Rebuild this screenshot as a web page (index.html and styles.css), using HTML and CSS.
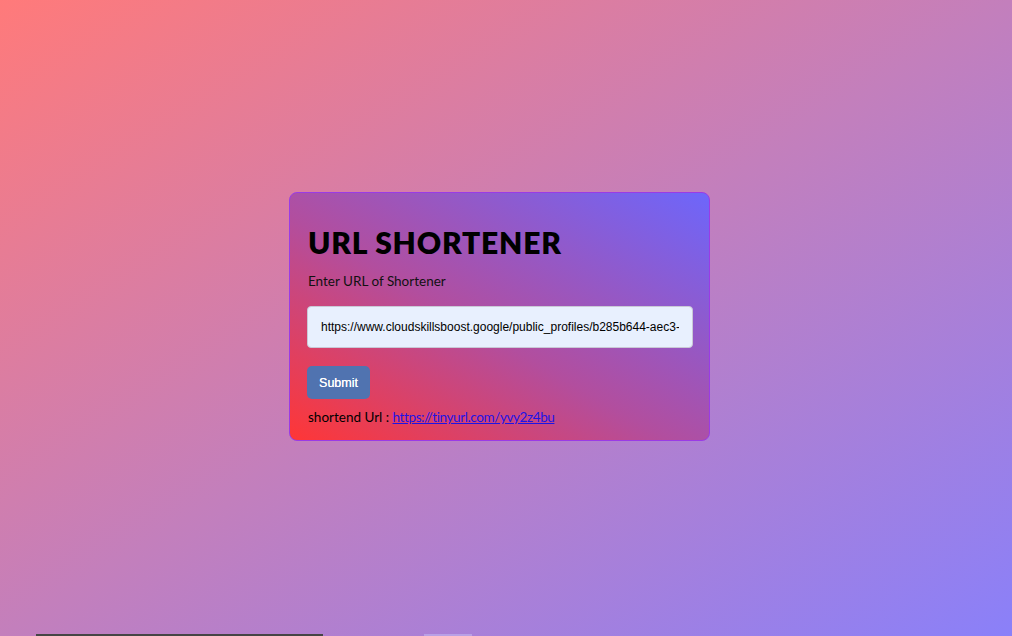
FILE: index.html
```html
<!DOCTYPE html>
<html>
<head>
<meta charset="utf-8">
<link rel="stylesheet" href="styles.css">
</head>
<body>
<main class="stage">
  <section class="card">
    <h1 class="title">URL SHORTENER</h1>
    <p class="label">Enter URL of Shortener</p>
    <input class="url-input" type="text" value="https://www.cloudskillsboost.google/public_profiles/b285b644-aec3-">
    <button class="submit">Submit</button>
    <p class="result">shortend Url : <a href="#" class="result-link">https://tinyurl.com/yvy2z4bu</a></p>
  </section>
</main>
<div class="footer">
  <span class="bar-dark"></span>
  <span class="bar-light"></span>
</div>
</body>
</html>
```

FILE: styles.css
```css
html, body {
  margin: 0;
  padding: 0;
}
body {
  width: 1012px;
  height: 636px;
  overflow: hidden;
  background: linear-gradient(to bottom right, #ff7a7a 0%, #c37fbc 50%, #8a80f9 100%);
  font-family: "Lato", "Open Sans", sans-serif;
}
.stage {
  height: 634px;
  display: flex;
  align-items: center;
  justify-content: center;
  padding-right: 13px;
  padding-bottom: 1px;
  box-sizing: border-box;
}
.card {
  width: 421px;
  height: 249px;
  box-sizing: border-box;
  border: 1px solid #9a3be6;
  border-radius: 8px;
  padding: 31px 17px 0 18px;
  background: linear-gradient(to top right, #ff3636 0%, #b24e9e 45%, #6d66fb 100%);
}
.title {
  margin: 0;
  font-size: 30px;
  font-weight: 800;
  line-height: 36px;
  color: #000;
  letter-spacing: 0.8px;
}
.label {
  margin: 12px 0 0;
  font-size: 13.5px;
  line-height: 18px;
  color: #111;
}
.url-input {
  display: block;
  width: 386px;
  height: 42px;
  margin: 16px 0 0 -1px;
  box-sizing: border-box;
  border: 1px solid #c9c9d6;
  border-radius: 4px;
  background: #e8f0fe;
  padding: 0 13px;
  font-family: "Liberation Sans", Arial, sans-serif;
  font-size: 12px;
  color: #000;
  outline: none;
}
.submit {
  display: block;
  margin: 18px 0 0 -1px;
  width: 63px;
  height: 33px;
  border: none;
  border-radius: 5px;
  background: #5073b0;
  color: #fff;
  font-family: "Liberation Sans", Arial, sans-serif;
  font-size: 12.5px;
  font-weight: 400;
  padding: 0;
  text-shadow: 0 0 0.3px #fff;
}
.result {
  margin: 8px 0 0;
  font-size: 13.5px;
  line-height: 20px;
  color: #000;
}
.result-link {
  color: #1d13e6;
  text-decoration: underline;
  letter-spacing: -0.4px;
}
.footer {
  display: flex;
  height: 2px;
  padding-left: 36px;
}
.bar-dark {
  width: 287px;
  height: 2px;
  background: #454545;
}
.bar-light {
  width: 48px;
  height: 2px;
  margin-left: 101px;
  background: #b9a0e6;
}
```
